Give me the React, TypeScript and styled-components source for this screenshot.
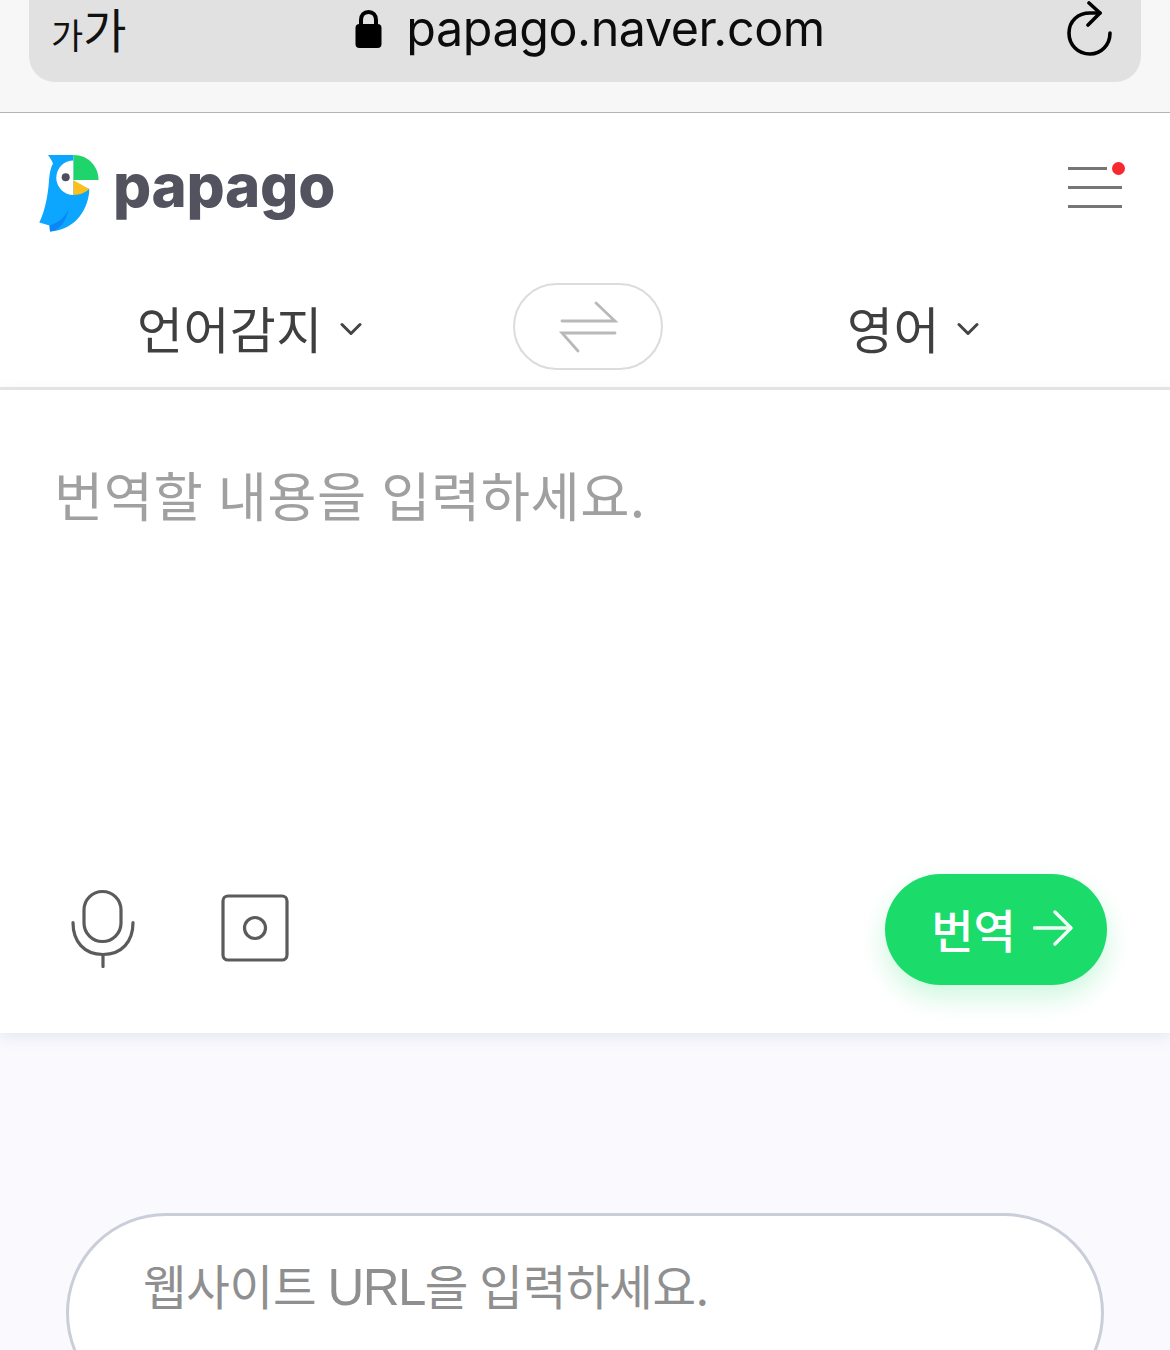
import React from "react";
import styled, { createGlobalStyle } from "styled-components";

const Global = createGlobalStyle`
  html, body { margin: 0; padding: 0; background: #fff; }
  body { width: 1170px; height: 1350px; overflow: hidden; font-family: "Noto Sans CJK KR", "Liberation Sans", sans-serif; }
`;

const Page = styled.div`
  width: 1170px;
  height: 1350px;
  overflow: hidden;
  display: flex;
  flex-direction: column;
`;

const BrowserBar = styled.header`
  height: 112px;
  flex: none;
  box-sizing: content-box;
  background: #f7f7f7;
  border-bottom: 1px solid #b4b4b4;
  padding: 0 29px;
`;

const AddressPill = styled.div`
  height: 82px;
  background: #e1e1e1;
  border-radius: 0 0 26px 26px;
  display: grid;
  grid-template-columns: 1fr auto 1fr;
  align-items: center;
  padding: 0 28px 24px 22px;
  box-sizing: border-box;
`;

const TextSize = styled.div`
  display: flex;
  align-items: flex-end;
  color: #111;
  line-height: 1;
  margin-top: -3px;
`;

const SmallGa = styled.span<{ $size: number }>`
  font-size: ${(p) => p.$size}px;
  font-weight: 400;
  line-height: 1;
`;

const UrlGroup = styled.div`
  display: flex;
  align-items: center;
  gap: 24px;
  margin-left: 16px;
`;

const UrlText = styled.span`
  font-family: "Inter", sans-serif;
  font-size: 48.4px;
  line-height: 58px;
  letter-spacing: -0.4px;
  color: #0c0c0c;
`;

const ReloadWrap = styled.div`
  justify-self: end;
  display: flex;
`;

const TopNav = styled.nav`
  height: 157px;
  flex: none;
  display: flex;
  align-items: center;
  justify-content: space-between;
  padding: 0 48px 0 39px;
  box-sizing: border-box;
`;

const Brand = styled.div`
  display: flex;
  align-items: center;
  gap: 14px;
  margin-top: 4px;
`;

const BrandName = styled.span`
  font-family: "Inter", sans-serif;
  font-weight: 800;
  font-size: 60px;
  line-height: 70px;
  letter-spacing: -0.3px;
  color: #53525f;
  margin-top: -18px;
`;

const Menu = styled.div`
  position: relative;
  width: 54px;
  height: 41px;
  display: flex;
  flex-direction: column;
  justify-content: space-between;
  margin-top: -9px;
`;

const MenuLine = styled.span<{ $short?: boolean }>`
  display: block;
  height: 3px;
  background: #767676;
  width: ${(p) => (p.$short ? 39 : 54)}px;
`;

const MenuDot = styled.span`
  position: absolute;
  top: -5px;
  right: -3px;
  width: 13px;
  height: 13px;
  border-radius: 50%;
  background: #f7282f;
`;

const LangBar = styled.div`
  height: 120px;
  flex: none;
  box-sizing: border-box;
  border-bottom: 3px solid #e8e8e8;
  display: flex;
  align-items: flex-start;
  padding-top: 13px;
  position: relative;
`;

const LangButton = styled.div<{ $width: number; $left: number }>`
  width: ${(p) => p.$width}px;
  margin-left: ${(p) => p.$left}px;
  display: flex;
  align-items: center;
  gap: 17px;
  height: 88px;
  font-size: 50px;
  line-height: 88px;
  color: #3f3f3f;
  letter-spacing: 0.4px;
`;

const ChevronSlot = styled.span`
  display: flex;
  margin-top: 4px;
`;

const SwapButton = styled.div`
  width: 150px;
  height: 87px;
  box-sizing: border-box;
  border: 2px solid #dcdcdc;
  border-radius: 44px;
  display: flex;
  align-items: center;
  justify-content: center;
  flex: none;
`;

const InputPanel = styled.section`
  height: 643px;
  flex: none;
  background: #fff;
  box-shadow: 0 3px 14px rgba(120, 125, 170, 0.16);
  box-sizing: border-box;
  padding: 64px 54px 0;
  display: flex;
  flex-direction: column;
  position: relative;
  z-index: 1;
`;

const Placeholder = styled.div`
  font-size: 53.5px;
  line-height: 80px;
  color: #a0a0a0;
  letter-spacing: 0.5px;
  word-spacing: 2px;
`;

const PanelFooter = styled.div`
  margin-top: auto;
  height: 111px;
  margin-bottom: 48px;
  display: flex;
  align-items: center;
  padding-left: 16px;
  margin-right: 9px;
`;

const ToolIcons = styled.div`
  display: flex;
  align-items: center;
  gap: 85px;
  flex: 1;
  margin-top: -3px;
`;

const TranslateButton = styled.button`
  width: 222px;
  height: 111px;
  border: 0;
  border-radius: 56px;
  background: #1bdb6b;
  box-shadow: 0 12px 26px rgba(27, 219, 107, 0.22);
  color: #fff;
  display: flex;
  align-items: center;
  justify-content: center;
  gap: 17px;
  font-family: inherit;
  font-size: 46px;
  font-weight: 500;
  line-height: 1;
  padding: 0 0 4px 12px;
`;

const Lower = styled.section`
  flex: 1;
  background: #f9f9fe;
  padding: 180px 66px 0;
`;

const UrlField = styled.div`
  height: 200px;
  width: 1038px;
  box-sizing: border-box;
  border: 3px solid #c9ced9;
  border-radius: 100px;
  background: #fff;
  padding: 29px 0 0 74px;
  font-size: 47.4px;
  line-height: 80px;
  color: #8f8f8f;
  letter-spacing: -0.3px;
  word-spacing: 1px;
`;

const UrlLatin = styled.span`
  font-family: "Liberation Sans", sans-serif;
  font-size: 51px;
  letter-spacing: -1.6px;
`;

const Chevron = () => (
  <svg width="22" height="14" viewBox="0 0 22 14" fill="none" stroke="#444" strokeWidth="3" strokeLinecap="round" strokeLinejoin="round">
    <path d="M2 2.5 L11 11.5 L20 2.5" />
  </svg>
);

const ParrotLogo = () => (
  <svg width="60" height="77" viewBox="0 0 60 77">
    <path d="M9 0 L34.5 0 V26 L50.3 34 C50 52 38 75 11 76.5 L10.5 70.5 L0.3 67.5 C6 56 9 40 10 26 C10.5 18 12 12 14 8.5 C12.5 5 11 2.5 9 0 Z" fill="#0ca6ff" />
    <path d="M34.5 5.5 A17.25 17.25 0 0 0 34.5 40 Z" fill="#fff" />
    <path d="M34.5 0 C50 0 59.5 12 59.5 25 L34.5 25 Z" fill="#1fd56b" />
    <path d="M34.5 25 L50.3 34 C47 37 41 40 34.5 40 Z" fill="#fdbf1c" />
    <path d="M34.5 25 H40 L50.3 34 Z" fill="#fff" />
    <circle cx="26.7" cy="22.3" r="4" fill="#4f4e5c" />
    <path d="M29.5 53 C27 62 19 68 10.5 70.5 L11 76.5 C20 76 28 66 29.5 53 Z" fill="#0b86f7" />
  </svg>
);

const Lock = () => (
  <svg width="27" height="41" viewBox="0 0 27 41">
    <path d="M6 17 V11 C6 6 9 3 13.5 3 C18 3 21 6 21 11 V17" fill="none" stroke="#000" strokeWidth="4" />
    <rect x="0.5" y="15" width="26" height="24" rx="4" fill="#000" />
  </svg>
);

const Reload = () => (
  <svg width="46" height="56" viewBox="0 0 46 56" fill="none" stroke="#000" strokeWidth="3.6" strokeLinecap="round" strokeLinejoin="round">
    <path d="M43 32 C43 44 34 53 23 53 C11 53 2 44 2 32 C2 20 11 12 23 12 L33 12" />
    <path d="M22 2 L33 12 L21 24" />
  </svg>
);

const SwapIcon = () => (
  <svg width="60" height="56" viewBox="0 0 60 56" fill="none" stroke="#b9b9b9" strokeWidth="2.8" strokeLinecap="round">
    <path d="M4 22 H57 L38 4" />
    <path d="M57 34 H4 L20 52" />
  </svg>
);

const MicIcon = () => (
  <svg width="66" height="80" viewBox="0 -1.5 66 80" fill="none" stroke="#5b5b5b" strokeWidth="3.2" strokeLinecap="round">
    <rect x="14" y="2" width="37" height="50" rx="18.5" />
    <path d="M3 33 C3 52 14 65 33 65 C52 65 63 52 63 33" />
    <path d="M33 65 V77" />
  </svg>
);

const CameraIcon = () => (
  <svg width="68" height="68" viewBox="0 0 68 68" fill="none" stroke="#5b5b5b" strokeWidth="3.2">
    <rect x="2" y="2" width="64" height="64" rx="5" />
    <circle cx="34" cy="34" r="10.5" />
  </svg>
);

const ArrowIcon = () => (
  <svg width="40" height="36" viewBox="0 0 40 36" fill="none" stroke="#fff" strokeWidth="3.4" strokeLinecap="round" strokeLinejoin="round" opacity="0.95">
    <path d="M1.5 18 H37.5 M22 2 L38 18 L22 34" />
  </svg>
);

export default function App() {
  return (
    <Page>
      <Global />
      <BrowserBar>
        <AddressPill>
          <TextSize>
            <SmallGa $size={35}>가</SmallGa>
            <SmallGa $size={47}>가</SmallGa>
          </TextSize>
          <UrlGroup>
            <Lock />
            <UrlText>papago.naver.com</UrlText>
          </UrlGroup>
          <ReloadWrap>
            <Reload />
          </ReloadWrap>
        </AddressPill>
      </BrowserBar>
      <TopNav>
        <Brand>
          <ParrotLogo />
          <BrandName>papago</BrandName>
        </Brand>
        <Menu>
          <MenuLine $short />
          <MenuLine />
          <MenuLine />
          <MenuDot />
        </Menu>
      </TopNav>
      <LangBar>
        <LangButton $width={376} $left={137}>
          언어감지
          <ChevronSlot>
            <Chevron />
          </ChevronSlot>
        </LangButton>
        <SwapButton>
          <SwapIcon />
        </SwapButton>
        <LangButton $width={300} $left={184}>
          영어
          <ChevronSlot>
            <Chevron />
          </ChevronSlot>
        </LangButton>
      </LangBar>
      <InputPanel>
        <Placeholder>번역할 내용을 입력하세요.</Placeholder>
        <PanelFooter>
          <ToolIcons>
            <MicIcon />
            <CameraIcon />
          </ToolIcons>
          <TranslateButton>
            번역 <ArrowIcon />
          </TranslateButton>
        </PanelFooter>
      </InputPanel>
      <Lower>
        <UrlField>
          웹사이트 <UrlLatin>URL</UrlLatin>을 입력하세요.
        </UrlField>
      </Lower>
    </Page>
  );
}
